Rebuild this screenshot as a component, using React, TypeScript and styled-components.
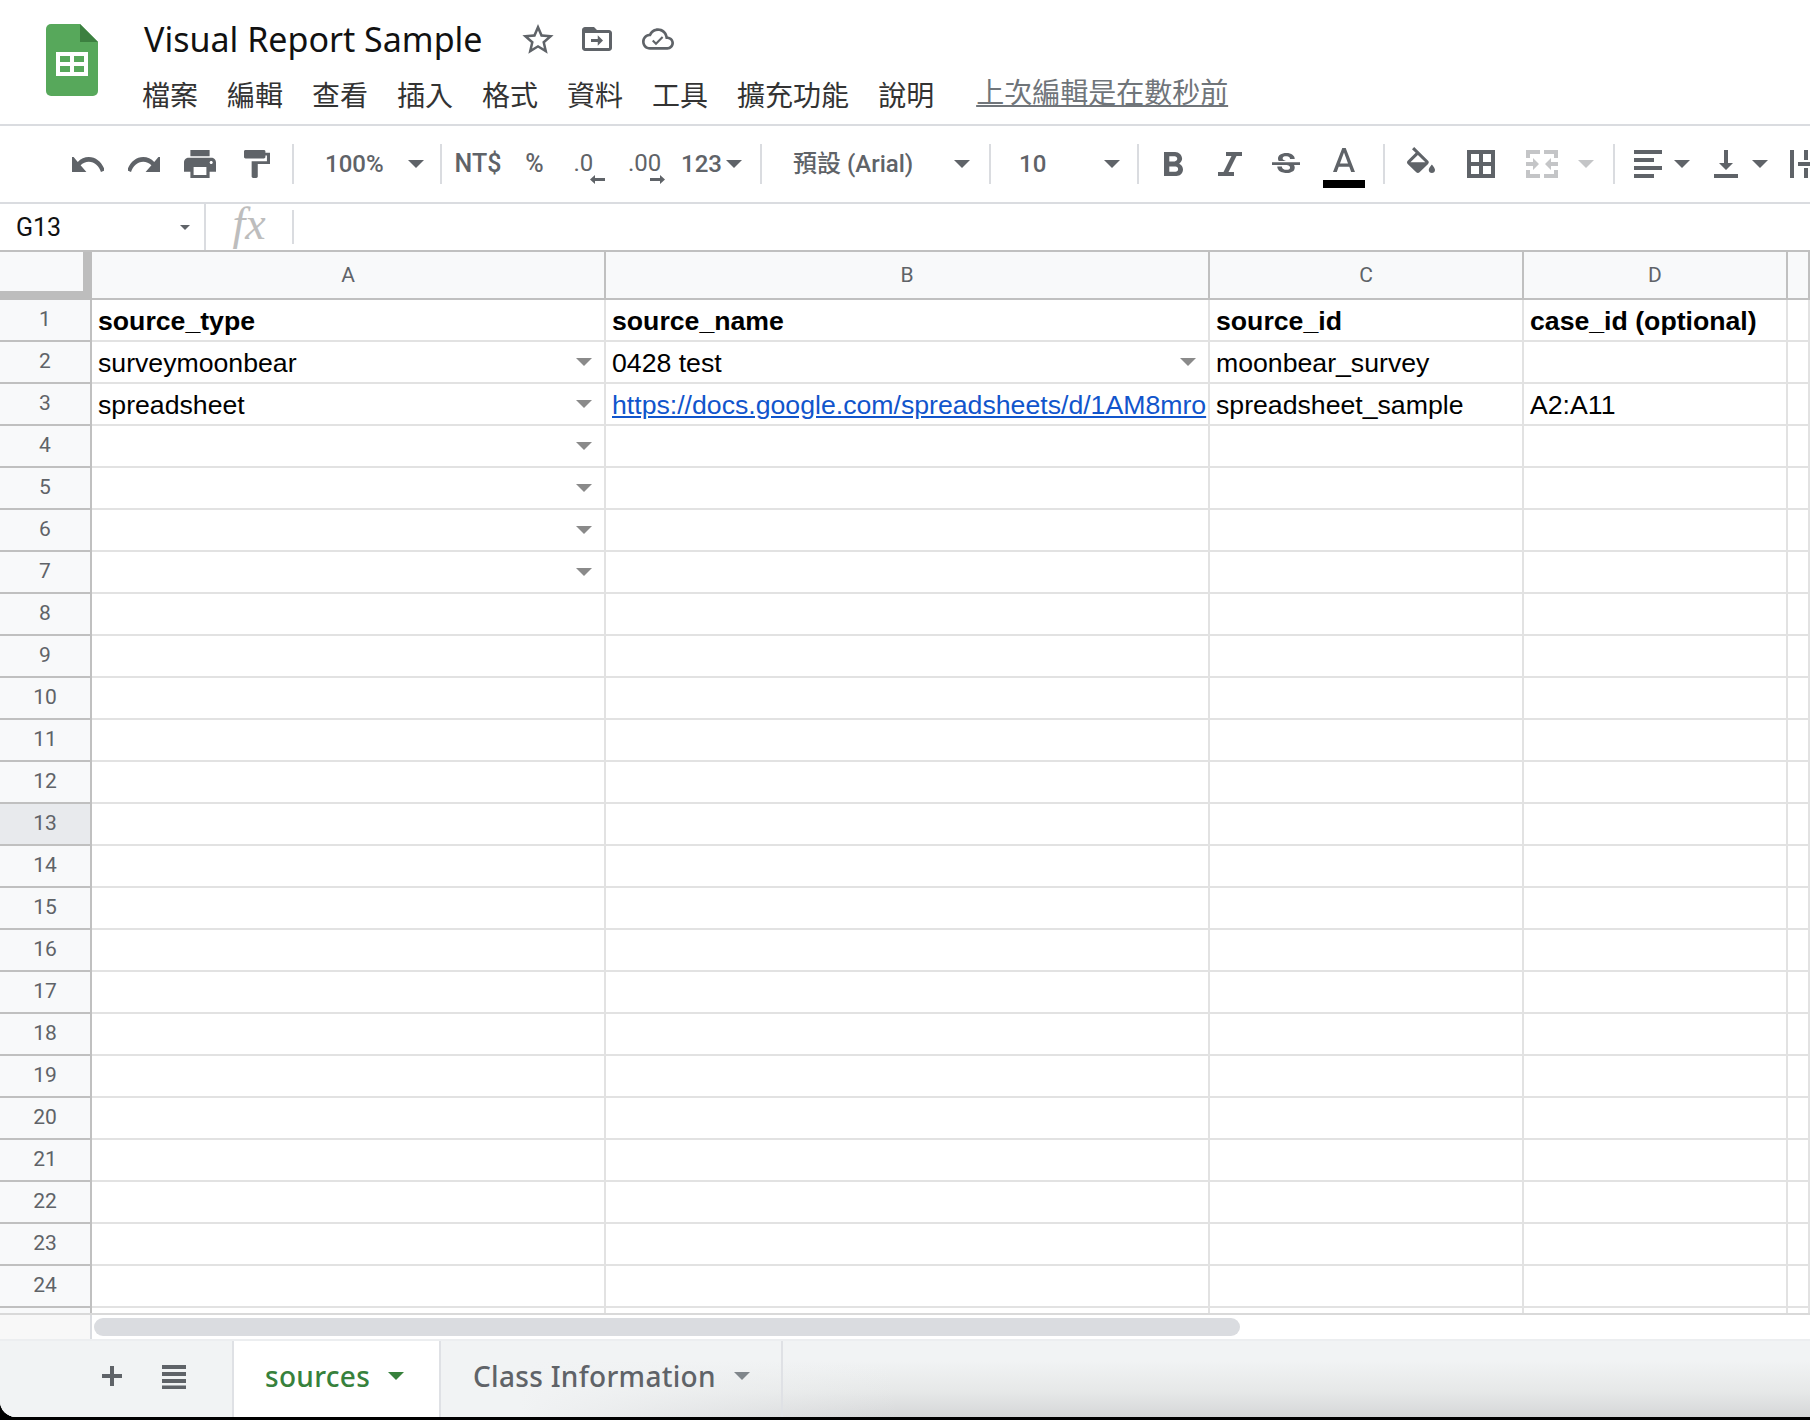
import * as React from 'react';
import styled, { createGlobalStyle } from 'styled-components';

const ICON = '#5f6368';
const UI_FONT = 'Roboto, "Noto Sans CJK TC", sans-serif';
const TITLE_FONT = '"Noto Sans", "Noto Sans CJK TC", sans-serif';
const CJK_FONT = '"Noto Sans CJK TC", Roboto, sans-serif';

const GlobalStyle = createGlobalStyle`
  html, body {
    margin: 0;
    padding: 0;
    width: 1810px;
    height: 1420px;
    overflow: hidden;
    background: #000;
  }
`;

const Page = styled.div`
  width: 1810px;
  height: 1417px;
  background: #fff;
  border-bottom-left-radius: 16px;
  overflow: hidden;
  display: flex;
  flex-direction: column;
`;

/* Header */
const Header = styled.header`
  height: 124px;
  flex: none;
  display: flex;
  padding-left: 46px;
  border-bottom: 2px solid #dadce0;
`;

const LogoBox = styled.div`
  width: 52px;
  padding-top: 24px;
  margin-right: 46px;
  flex: none;
`;

const HeaderText = styled.div`
  display: flex;
  flex-direction: column;
`;

const TitleRow = styled.div`
  display: flex;
  align-items: center;
  height: 78px;
`;

const DocTitle = styled.div`
  font-family: ${TITLE_FONT};
  font-size: 34px;
  color: #111;
  width: 378px;
  white-space: nowrap;
`;

const TitleIcon = styled.svg<{ $ml: number }>`
  margin-left: ${(p) => p.$ml}px;
  flex: none;
  fill: ${ICON};
`;

const MenuRow = styled.nav`
  display: flex;
  align-items: center;
  gap: 29px;
  height: 32px;
  margin-left: -2px;
`;

const MenuItem = styled.span`
  font-family: ${CJK_FONT};
  font-size: 28px;
  line-height: 32px;
  color: #333;
  white-space: nowrap;
`;

const LastEdit = styled.span`
  font-family: ${CJK_FONT};
  font-size: 28px;
  line-height: 32px;
  color: #70757a;
  text-decoration: underline;
  margin-left: 13px;
  margin-top: -6px;
  white-space: nowrap;
`;

/* Toolbar */
const Toolbar = styled.div`
  height: 76px;
  flex: none;
  display: flex;
  align-items: center;
  padding-left: 60px;
  border-bottom: 2px solid #dadce0;
  overflow: hidden;
`;

const Slot = styled.div<{ $w?: number; $ml?: number }>`
  ${(p) => (p.$w ? `width: ${p.$w}px;` : '')}
  margin-left: ${(p) => p.$ml ?? 0}px;
  flex: none;
  display: flex;
  justify-content: center;
  align-items: center;
  font-family: ${UI_FONT};
  font-size: 24px;
  font-weight: 500;
  line-height: 28px;
  color: ${ICON};
`;

const Dropdown = styled.div<{ $w: number; $pl: number; $pr: number }>`
  width: ${(p) => p.$w}px;
  padding: 0 ${(p) => p.$pr}px 0 ${(p) => p.$pl}px;
  box-sizing: border-box;
  flex: none;
  display: flex;
  justify-content: space-between;
  align-items: center;
  font-family: ${UI_FONT};
  font-size: 24px;
  font-weight: 500;
  line-height: 28px;
  color: ${ICON};
  white-space: nowrap;
`;

const Divider = styled.div<{ $ml?: number }>`
  width: 2px;
  height: 40px;
  flex: none;
  margin-left: ${(p) => p.$ml ?? 0}px;
  background: #dadce0;
`;

const Caret = styled.span<{ $w?: number; $h?: number; $color?: string; $ml?: number }>`
  display: block;
  flex: none;
  width: 0;
  height: 0;
  margin-left: ${(p) => p.$ml ?? 0}px;
  border-left: ${(p) => (p.$w ?? 16) / 2}px solid transparent;
  border-right: ${(p) => (p.$w ?? 16) / 2}px solid transparent;
  border-top: ${(p) => p.$h ?? (p.$w ?? 16) / 2}px solid ${(p) => p.$color ?? ICON};
`;

const ToolIcon = styled.svg<{ $color?: string; $raise?: number }>`
  display: block;
  flex: none;
  fill: ${(p) => p.$color ?? ICON};
  margin-bottom: ${(p) => p.$raise ?? 0}px;
`;

const StrongLabel = styled.span`
  font-weight: 500;
  font-size: 25px;
`;

const DecimalStack = styled.div<{ $w: number }>`
  width: ${(p) => p.$w}px;
  display: flex;
  flex-direction: column;
  align-items: flex-start;
  margin-top: 6px;
`;

const DecimalText = styled.span`
  font-size: 24px;
  line-height: 24px;
  font-weight: 400;
`;

const DecimalArrow = styled.svg`
  align-self: flex-end;
  fill: ${ICON};
`;

const ColorStack = styled.div`
  display: flex;
  flex-direction: column;
  align-items: center;
  gap: 8px;
  margin-top: 8px;
`;

const ColorBar = styled.div`
  width: 42px;
  height: 8px;
  background: #000;
`;

/* Formula bar */
const FormulaBar = styled.div`
  height: 46px;
  flex: none;
  display: flex;
  align-items: center;
`;

const NameBox = styled.div`
  width: 206px;
  height: 100%;
  flex: none;
  box-sizing: border-box;
  padding: 0 14px 0 16px;
  border-right: 2px solid #dadce0;
  display: flex;
  justify-content: space-between;
  align-items: center;
  font-family: ${UI_FONT};
  font-size: 25px;
  color: #111;
`;

const FxBox = styled.div`
  width: 86px;
  flex: none;
  font-family: "Liberation Serif", serif;
  font-style: italic;
  font-size: 46px;
  line-height: 40px;
  padding-bottom: 6px;
  color: #bdbdbd;
  text-align: center;
`;

const FxDivider = styled.div`
  width: 2px;
  height: 34px;
  background: #dadce0;
`;

/* Sheet */
const Sheet = styled.div`
  flex: none;
  display: grid;
  grid-template-columns: 92px 514px 604px 314px 264px 1fr;
  grid-auto-rows: 42px;
  height: 1065px;
  overflow: hidden;
  align-content: start;
  grid-template-rows: 48px;
  border-top: 2px solid #c0c0c0;
  box-sizing: border-box;
  border-bottom: 2px solid #d9d9d9;
`;

const Corner = styled.div`
  background: #f8f9fa;
  border-right: 9px solid #bdbdbd;
  border-bottom: 9px solid #bdbdbd;
`;

const ColHeader = styled.div`
  background: #f8f9fa;
  border-right: 2px solid #c0c0c0;
  border-bottom: 2px solid #c0c0c0;
  display: flex;
  align-items: center;
  justify-content: center;
  padding-bottom: 1px;
  font-family: ${UI_FONT};
  font-size: 21px;
  color: ${ICON};
`;

const RowHeader = styled.div<{ $active: boolean }>`
  background: ${(p) => (p.$active ? '#e8eaed' : '#f8f9fa')};
  border-right: 2px solid #c0c0c0;
  border-bottom: 2px solid #c0c0c0;
  display: flex;
  align-items: center;
  justify-content: center;
  padding-bottom: 3px;
  font-family: ${UI_FONT};
  font-size: 21px;
  color: ${ICON};
`;

const Cell = styled.div<{ $bold?: boolean }>`
  border-right: 2px solid #e2e2e2;
  border-bottom: 2px solid #e2e2e2;
  padding: 2px 0 0 6px;
  display: flex;
  align-items: center;
  justify-content: space-between;
  overflow: hidden;
  white-space: nowrap;
  font-family: "Liberation Sans", Arial, sans-serif;
  font-size: 26.67px;
  font-weight: ${(p) => (p.$bold ? 700 : 400)};
  color: #000;
`;

const CellLink = styled.span`
  color: #1155cc;
  text-decoration: underline;
`;

const CellCaret = styled(Caret)`
  margin-right: 12px;
  margin-left: auto;
  margin-bottom: 2px;
`;

/* Scroll row and tabs */
const ScrollRow = styled.div`
  height: 24px;
  flex: none;
  display: flex;
  border-bottom: 2px solid #eceef0;
`;

const ScrollCorner = styled.div`
  width: 92px;
  flex: none;
  box-sizing: border-box;
  background: #f8f8f8;
  border-right: 2px solid #dadce0;
`;

const ScrollThumb = styled.div`
  width: 1146px;
  height: 18px;
  margin: 3px 0 0 2px;
  border-radius: 9px;
  background: #dadce0;
`;

const TabBar = styled.div`
  flex: 1;
  display: flex;
  background:
    linear-gradient(to right, #f1f3f4 520px, rgba(241, 243, 244, 0) 900px),
    linear-gradient(#f1f3f4 25%, #e6e8e8 65%, #d4d5d7);
`;

const AddButton = styled.svg`
  margin: 25px 0 0 102px;
  flex: none;
  fill: ${ICON};
`;

const AllSheets = styled.svg`
  margin: 24px 0 0 40px;
  flex: none;
  fill: ${ICON};
`;

const Tab = styled.div<{ $active: boolean; $w: number; $pl: number; $ml?: number }>`
  width: ${(p) => p.$w}px;
  margin-left: ${(p) => p.$ml ?? 0}px;
  padding-left: ${(p) => p.$pl}px;
  box-sizing: border-box;
  flex: none;
  display: flex;
  align-items: center;
  gap: 18px;
  height: 78px;
  padding-bottom: 8px;
  background: ${(p) => (p.$active ? '#fff' : 'transparent')};
  border-right: 2px solid #dfe1e5;
  border-left: ${(p) => (p.$active ? '2px solid #dfe1e5' : '0')};
  font-family: ${TITLE_FONT};
  font-size: 28px;
  font-weight: 500;
  letter-spacing: 0.3px;
  color: ${(p) => (p.$active ? '#37813c' : ICON)};
  white-space: nowrap;
`;

const SheetsLogo = () => (
  <svg width="52" height="72" viewBox="0 0 52 72">
    <path d="M5 0h29l18 18v49a5 5 0 0 1-5 5H5a5 5 0 0 1-5-5V5a5 5 0 0 1 5-5z" fill="#57a85b" />
    <path d="M34 0l18 18H34z" fill="#3c8040" />
    <path
      d="M10 28h32v24H10z M14 32v6h10v-6z M28 32v6h10v-6z M14 42v6h10v-6z M28 42v6h10v-6z"
      fill="#fff"
      fillRule="evenodd"
    />
  </svg>
);

const columns = ['A', 'B', 'C', 'D'];

const rows: React.ReactNode[][] = [
  ['source_type', 'source_name', 'source_id', 'case_id (optional)'],
  ['surveymoonbear', '0428 test', 'moonbear_survey', ''],
  [
    'spreadsheet',
    <CellLink key="link">https://docs.google.com/spreadsheets/d/1AM8mro</CellLink>,
    'spreadsheet_sample',
    'A2:A11',
  ],
];

const menu = ['檔案', '編輯', '查看', '插入', '格式', '資料', '工具', '擴充功能', '說明'];

const hasCaret = (row: number, col: number) =>
  (col === 0 && row >= 2 && row <= 7) || (col === 1 && row === 2);

const App: React.FC = () => (
  <Page>
    <GlobalStyle />
    <Header>
      <LogoBox>
        <SheetsLogo />
      </LogoBox>
      <HeaderText>
        <TitleRow>
          <DocTitle>Visual Report Sample</DocTitle>
          <TitleIcon width="32" height="30" viewBox="2 2 20 19.2" $ml={0}>
            <path d="M22 9.24l-7.19-.62L12 2 9.19 8.63 2 9.24l5.46 4.73L5.82 21 12 17.27 18.18 21l-1.63-7.03L22 9.24zM12 15.4l-3.76 2.27 1-4.28-3.32-2.88 4.38-.38L12 6.1l1.71 4.04 4.38.38-3.32 2.88 1 4.28L12 15.4z" />
          </TitleIcon>
          <TitleIcon width="30" height="24" viewBox="2 4 20 16" $ml={28}>
            <path
              fillRule="evenodd"
              d="M20 6h-8l-2-2H4c-1.1 0-2 .9-2 2v12c0 1.1.9 2 2 2h16c1.1 0 2-.9 2-2V8c0-1.1-.9-2-2-2zm0 12H4V8h16v10zM12.5 9.5l3.5 3.5-3.5 3.5V14H8v-2h4.5z"
            />
          </TitleIcon>
          <TitleIcon width="32" height="22" viewBox="0 4 24 16" $ml={30}>
            <path d="M19.35 10.04C18.67 6.59 15.64 4 12 4 9.11 4 6.6 5.64 5.35 8.04 2.34 8.36 0 10.91 0 14c0 3.31 2.69 6 6 6h13c2.76 0 5-2.24 5-5 0-2.64-2.05-4.78-4.65-4.96zM19 18H6c-2.21 0-4-1.79-4-4 0-2.05 1.53-3.76 3.56-3.97l1.07-.11.5-.95C8.08 7.14 9.94 6 12 6c2.62 0 4.88 1.86 5.39 4.43l.3 1.5 1.53.11c1.56.1 2.78 1.41 2.78 2.96 0 1.65-1.35 3-3 3zM10.5 16.6l-3-3 1.1-1.1 1.9 1.9 4.4-4.4 1.1 1.1z" />
          </TitleIcon>
        </TitleRow>
        <MenuRow>
          {menu.map((item) => (
            <MenuItem key={item}>{item}</MenuItem>
          ))}
          <LastEdit>上次編輯是在數秒前</LastEdit>
        </MenuRow>
      </HeaderText>
    </Header>

    <Toolbar>
      <Slot $w={56}>
        <ToolIcon width="32" height="15" viewBox="2 8 20 8" preserveAspectRatio="none">
          <path d="M12.5 8c-2.65 0-5.05.99-6.9 2.6L2 7v9h9l-3.62-3.62c1.39-1.16 3.16-1.88 5.12-1.88 3.54 0 6.55 2.31 7.6 5.5l2.37-.78C21.08 11.03 17.15 8 12.5 8z" />
        </ToolIcon>
      </Slot>
      <Slot $w={56}>
        <ToolIcon width="32" height="15" viewBox="2 8 20 8" preserveAspectRatio="none">
          <path d="M18.4 10.6C16.55 8.99 14.15 8 11.5 8c-4.65 0-8.58 3.03-9.96 7.22L3.9 16c1.05-3.19 4.05-5.5 7.6-5.5 1.95 0 3.73.72 5.12 1.88L13 16h9V7l-3.6 3.6z" />
        </ToolIcon>
      </Slot>
      <Slot $w={56}>
        <ToolIcon width="32" height="28" viewBox="2 3 20 18" preserveAspectRatio="none">
          <path d="M19 8H5c-1.66 0-3 1.34-3 3v6h4v4h12v-4h4v-6c0-1.66-1.34-3-3-3zm-3 11H8v-5h8v5zm3-7c-.55 0-1-.45-1-1s.45-1 1-1 1 .45 1 1-.45 1-1 1zm-1-9H6v4h12V3z" />
        </ToolIcon>
      </Slot>
      <Slot $w={58}>
        <ToolIcon width="26" height="28" viewBox="4 2 17 20" preserveAspectRatio="none">
          <path d="M18 4V3c0-.55-.45-1-1-1H5c-.55 0-1 .45-1 1v4c0 .55.45 1 1 1h12c.55 0 1-.45 1-1V6h1v4H9v11c0 .55.45 1 1 1h2c.55 0 1-.45 1-1v-9h8V4h-3z" />
        </ToolIcon>
      </Slot>
      <Divider $ml={6} />
      <Dropdown $w={146} $pl={31} $pr={16}>
        100%
        <Caret />
      </Dropdown>
      <Divider />
      <Slot $w={72}>
        <StrongLabel>NT$</StrongLabel>
      </Slot>
      <Slot $w={41}>
        <StrongLabel>%</StrongLabel>
      </Slot>
      <Slot $w={68}>
        <DecimalStack $w={31}>
          <DecimalText>.0</DecimalText>
          <DecimalArrow width="15" height="9" viewBox="0 0 15 9">
            <path d="M5 0v3h10v3H5v3L0 4.5z" />
          </DecimalArrow>
        </DecimalStack>
      </Slot>
      <Slot $w={47}>
        <DecimalStack $w={37}>
          <DecimalText>.00</DecimalText>
          <DecimalArrow width="15" height="9" viewBox="0 0 15 9">
            <path d="M10 0v3H0v3h10v3l5-4.5z" />
          </DecimalArrow>
        </DecimalStack>
      </Slot>
      <Dropdown $w={88} $pl={11} $pr={16}>
        123
        <Caret />
      </Dropdown>
      <Divider $ml={2} />
      <Dropdown $w={227} $pl={31} $pr={19}>
        預設 (Arial)
        <Caret />
      </Dropdown>
      <Divider />
      <Dropdown $w={146} $pl={28} $pr={17}>
        10
        <Caret />
      </Dropdown>
      <Divider />
      <Slot $w={69}>
        <ToolIcon width="19" height="24" viewBox="7 4 10.75 14" preserveAspectRatio="none">
          <path d="M15.6 10.79c.97-.67 1.65-1.77 1.65-2.79 0-2.26-1.75-4-4-4H7v14h7.04c2.09 0 3.71-1.7 3.71-3.79 0-1.52-.86-2.82-2.15-3.42zM10 6.5h3c.83 0 1.5.67 1.5 1.5s-.67 1.5-1.5 1.5h-3v-3zm3.5 9H10v-3h3.5c.83 0 1.5.67 1.5 1.5s-.67 1.5-1.5 1.5z" />
        </ToolIcon>
      </Slot>
      <Slot $w={44}>
        <ToolIcon width="24" height="24" viewBox="0 0 24 24">
          <path d="M8 0h16v4h-5.5L10.5 20H16v4H0v-4h5.5L13.5 4H8z" />
        </ToolIcon>
      </Slot>
      <Slot $w={68}>
        <ToolIcon width="28" height="26" viewBox="3 1.5 18 19.5" preserveAspectRatio="none">
          <path d="M7.24 8.75c-.26-.48-.39-1.03-.39-1.67 0-.61.13-1.16.4-1.67.26-.5.63-.93 1.11-1.29.48-.35 1.05-.63 1.7-.83.66-.19 1.39-.29 2.18-.29.81 0 1.54.11 2.21.34.66.22 1.23.54 1.69.94.47.4.83.88 1.08 1.43.25.55.38 1.15.38 1.81h-3.01c0-.31-.05-.59-.15-.85-.09-.27-.24-.49-.44-.68-.2-.19-.45-.33-.75-.44-.3-.1-.66-.16-1.06-.16-.39 0-.74.04-1.03.13-.29.09-.53.21-.72.36-.19.16-.34.34-.44.55-.1.21-.15.43-.15.66 0 .48.25.88.74 1.21.38.25.77.48 1.41.7H7.39c-.05-.08-.11-.17-.15-.25zM21 12v-2H3v2h9.62c.18.07.4.14.55.2.37.17.66.34.87.51.21.17.35.36.43.57.07.2.11.43.11.69 0 .23-.05.45-.14.66-.09.2-.23.38-.42.53-.19.15-.42.26-.71.35-.29.08-.63.13-1.01.13-.43 0-.83-.04-1.18-.13s-.66-.23-.91-.42c-.25-.19-.45-.44-.59-.75-.14-.31-.25-.76-.25-1.21H6.4c0 .55.08 1.13.24 1.58.16.45.37.85.65 1.21.28.35.6.66.98.92.37.26.78.48 1.22.65.44.17.9.3 1.38.39.48.08.96.13 1.44.13.8 0 1.53-.09 2.18-.28s1.21-.45 1.67-.79c.46-.34.82-.77 1.07-1.27s.38-1.07.38-1.71c0-.6-.1-1.14-.31-1.61-.05-.11-.11-.23-.17-.33H21z" />
        </ToolIcon>
      </Slot>
      <Slot $w={48}>
        <ColorStack>
          <ToolIcon width="22" height="24" viewBox="5.5 3 13 14" preserveAspectRatio="none">
            <path d="M11 3 5.5 17h2.25l1.12-3h6.25l1.12 3h2.25L13 3h-2zm-1.38 9L12 5.67 14.38 12H9.62z" />
          </ToolIcon>
          <ColorBar />
        </ColorStack>
      </Slot>
      <Divider $ml={15} />
      <Slot $w={72}>
        <ToolIcon width="28" height="26" viewBox="3 0 18 17" preserveAspectRatio="none" $raise={8}>
          <path d="M16.56 8.94L7.62 0 6.21 1.41l2.38 2.38-5.15 5.15c-.59.59-.59 1.54 0 2.12l5.5 5.5c.29.29.68.44 1.06.44s.77-.15 1.06-.44l5.5-5.5c.59-.58.59-1.53 0-2.12zM5.21 10L10 5.21 14.79 10H5.21zM19 11.5s-2 2.17-2 3.5c0 1.1.9 2 2 2s2-.9 2-2c0-1.33-2-3.5-2-3.5z" />
        </ToolIcon>
      </Slot>
      <Slot $w={48}>
        <ToolIcon width="28" height="28" viewBox="0 0 28 28">
          <path d="M0 0v28h28V0H0zm12 24H4v-8h8v8zm0-12H4V4h8v8zm12 12h-8v-8h8v8zm0-12h-8V4h8v8z" />
        </ToolIcon>
      </Slot>
      <Slot $w={73}>
        <ToolIcon width="32" height="28" viewBox="0 0 32 28" $color="#c4c5c7">
          <path d="M0 0h14v4H4v4H0zM18 0h14v8h-4V4H18zM0 20h4v4h10v4H0zM28 20h4v8H18v-4h10zM0 12h7V8l6 6-6 6v-4H0zM32 12h-7V8l-6 6 6 6v-4h7z" />
        </ToolIcon>
      </Slot>
      <Caret $color="#c4c5c7" />
      <Divider $ml={19} />
      <Slot $ml={19}>
        <ToolIcon width="28" height="28" viewBox="0 0 28 28">
          <path d="M0 0h28v4H0zM0 8h20v4H0zM0 16h28v4H0zM0 24h20v4H0z" />
        </ToolIcon>
      </Slot>
      <Caret $ml={12} />
      <Slot $ml={24}>
        <ToolIcon width="24" height="28" viewBox="0 0 24 28">
          <path d="M10 0h4v13h5l-7 7-7-7h5zM0 24h24v4H0z" />
        </ToolIcon>
      </Slot>
      <Caret $ml={14} />
      <Slot $ml={22}>
        <ToolIcon width="24" height="28" viewBox="0 0 24 28">
          <path d="M0 0h4v28H0zM14 0h4v10h-4zM14 18h4v10h-4zM8 12h16v4H8z" />
        </ToolIcon>
      </Slot>
    </Toolbar>

    <FormulaBar>
      <NameBox>
        G13
        <Caret $w={10} />
      </NameBox>
      <FxBox>fx</FxBox>
      <FxDivider />
    </FormulaBar>

    <Sheet>
      <Corner />
      {columns.map((c) => (
        <ColHeader key={c}>{c}</ColHeader>
      ))}
      <ColHeader />
      {Array.from({ length: 25 }, (_, i) => i + 1).map((n) => (
        <React.Fragment key={n}>
          <RowHeader $active={n === 13}>{n === 25 ? '' : n}</RowHeader>
          {columns.map((c, col) => (
            <Cell key={c} $bold={n === 1}>
              {rows[n - 1]?.[col]}
              {hasCaret(n, col) && <CellCaret $color="#8a8a8a" $w={16} $h={8} />}
            </Cell>
          ))}
          <Cell />
        </React.Fragment>
      ))}
    </Sheet>

    <ScrollRow>
      <ScrollCorner />
      <ScrollThumb />
    </ScrollRow>

    <TabBar>
      <AddButton width="20" height="20" viewBox="0 0 20 20">
        <path d="M8 0h4v8h8v4h-8v8H8v-8H0V8h8z" />
      </AddButton>
      <AllSheets width="24" height="24" viewBox="0 0 24 24">
        <path d="M0 0h24v4H0zM0 7h24v4H0zM0 14h24v4H0zM0 20.5h24v3.5H0z" />
      </AllSheets>
      <Tab $active $w={209} $pl={31} $ml={46}>
        sources
        <Caret $color="#37813c" />
      </Tab>
      <Tab $active={false} $w={342} $pl={32}>
        Class Information
        <Caret $color="#80868b" />
      </Tab>
    </TabBar>
  </Page>
);

export default App;
